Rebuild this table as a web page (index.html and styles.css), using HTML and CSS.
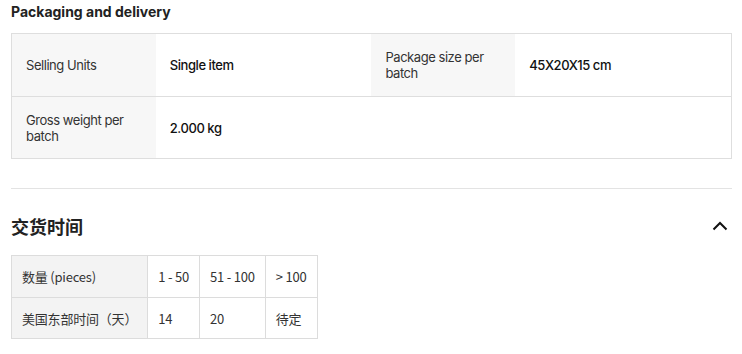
FILE: index.html
```html
<!DOCTYPE html>
<html>
<head>
  <title>Packaging and delivery</title>
  <link rel="stylesheet" href="styles.css">
</head>
<body>
  <div class="page">
    <section class="packaging">
      <h2 class="section-title">Packaging and delivery</h2>
      <table class="attr-table">
        <tr class="attr-row-first">
          <td class="attr-name">Selling Units</td>
          <td class="attr-value">Single item</td>
          <td class="attr-name">Package size per batch</td>
          <td class="attr-value">45X20X15 cm</td>
        </tr>
        <tr>
          <td class="attr-name">Gross weight per batch</td>
          <td class="attr-value" colspan="3">2.000 kg</td>
        </tr>
      </table>
    </section>

    <section class="lead-time">
      <div class="lead-header">
        <h2 class="lead-title">交货时间</h2>
        <svg class="chevron" width="16" height="10" viewBox="0 0 16 10">
          <path d="M1.5 8.5 L8 2 L14.5 8.5" fill="none" stroke="#111" stroke-width="2"/>
        </svg>
      </div>
      <table class="lead-table">
        <tr>
          <td class="lead-name">数量 (pieces)</td>
          <td>1 - 50</td>
          <td>51 - 100</td>
          <td>&gt; 100</td>
        </tr>
        <tr class="lead-row-last">
          <td class="lead-name">美国东部时间（天）</td>
          <td>14</td>
          <td>20</td>
          <td>待定</td>
        </tr>
      </table>
    </section>
  </div>
</body>
</html>
```

FILE: styles.css
```css
body {
  margin: 0;
  font-family: Inter, "Noto Sans CJK SC", sans-serif;
  color: #222;
  background-color: #fff;
}

.page {
  padding: 0 10px 0 11px;
}

.section-title {
  margin: 0;
  padding-top: 1px;
  height: 32px;
  font-size: 14px;
  line-height: 22px;
  font-weight: 700;
  color: #222;
}

.attr-table {
  width: 100%;
  border-collapse: collapse;
  border: 1px solid #dedede;
  font-size: 13px;
  line-height: 16px;
  letter-spacing: -0.45px;
}

.attr-table td {
  height: 61px;
  padding: 0 14px;
  border-bottom: 1px solid #dedede;
  vertical-align: middle;
}

.attr-row-first td {
  height: 62px;
}

.attr-name {
  width: 116px;
  background-color: #f7f7f7;
  color: #333;
}

.attr-value {
  width: 188px;
  font-weight: 500;
  color: #111;
}

.lead-time {
  margin-top: 29px;
  border-top: 1px solid #e3e3e3;
}

.lead-header {
  display: flex;
  justify-content: space-between;
  align-items: center;
  height: 66px;
  padding-top: 7px;
  box-sizing: border-box;
}

.lead-title {
  margin: 0;
  font-family: "Noto Sans CJK SC", sans-serif;
  font-size: 18px;
  line-height: 26px;
  font-weight: 700;
  color: #222;
}

.chevron {
  margin-right: 4px;
}

.lead-table {
  border-collapse: collapse;
  font-family: "Noto Sans CJK SC", sans-serif;
  font-size: 13px;
  letter-spacing: -0.2px;
  color: #333;
}

.lead-table td {
  height: 41px;
  padding: 0 10px;
  border: 1px solid #dcdcdc;
  white-space: nowrap;
}

.lead-row-last td {
  height: 40px;
}

.lead-name {
  background-color: #f3f3f3;
}
```
